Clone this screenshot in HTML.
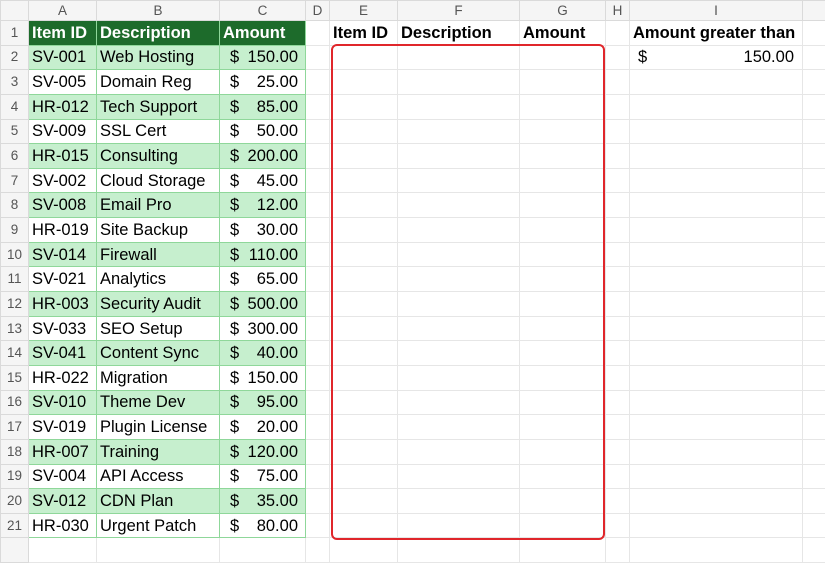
<!DOCTYPE html>
<html><head><style>
*{margin:0;padding:0;box-sizing:border-box}
body{width:825px;height:544px;overflow:hidden;background:#fff;font-family:"Liberation Sans",sans-serif;position:relative}
table{border-collapse:collapse;table-layout:fixed;position:absolute;left:0;top:0;width:832px}
td{height:24.65px;border:1px solid #e6e6e6;font-size:16.5px;color:#000;white-space:nowrap;overflow:hidden;padding:0 3px;line-height:22px}
tr.h td{height:20px;background:#f5f5f5;color:#555;font-size:13.5px;text-align:center;border-color:#dadada;line-height:18px}
td.rn{background:#f5f5f5;color:#555;font-size:13.5px;text-align:center;border-color:#dadada;padding:0}
td.g{background:#c6efce;border-color:#8fd79a}
td.w{border-color:#8fd79a}
td.hd{background:#1d6b2b;color:#fff;font-weight:bold;border-color:#8fd79a}
td.b{font-weight:bold}
.amt{display:flex;justify-content:space-between;padding:0 4px 0 7px}
#box{position:absolute;left:331px;top:44px;width:274px;height:496px;border:2px solid #e0262b;border-radius:6px}
</style></head><body>
<table>
<colgroup><col style="width:28px"><col style="width:68px"><col style="width:123px"><col style="width:86px"><col style="width:24px"><col style="width:68px"><col style="width:122px"><col style="width:86px"><col style="width:24px"><col style="width:173px"><col style="width:30px"></colgroup>
<tr class="h"><td></td><td>A</td><td>B</td><td>C</td><td>D</td><td>E</td><td>F</td><td>G</td><td>H</td><td>I</td><td></td></tr>
<tr><td class="rn">1</td><td class="hd">Item ID</td><td class="hd">Description</td><td class="hd">Amount</td><td></td><td class="b">Item ID</td><td class="b">Description</td><td class="b">Amount</td><td></td><td class="b">Amount greater than</td><td></td></tr>
<tr><td class="rn">2</td><td class="g">SV-001</td><td class="g">Web Hosting</td><td class="g"><div class="amt"><span>$</span><span>150.00</span></div></td><td></td><td></td><td></td><td></td><td></td><td style="padding:0 4px 0 1px"><div class="amt"><span>$</span><span>150.00</span></div></td><td></td></tr>
<tr><td class="rn">3</td><td class="w">SV-005</td><td class="w">Domain Reg</td><td class="w"><div class="amt"><span>$</span><span>25.00</span></div></td><td></td><td></td><td></td><td></td><td></td><td></td><td></td></tr>
<tr><td class="rn">4</td><td class="g">HR-012</td><td class="g">Tech Support</td><td class="g"><div class="amt"><span>$</span><span>85.00</span></div></td><td></td><td></td><td></td><td></td><td></td><td></td><td></td></tr>
<tr><td class="rn">5</td><td class="w">SV-009</td><td class="w">SSL Cert</td><td class="w"><div class="amt"><span>$</span><span>50.00</span></div></td><td></td><td></td><td></td><td></td><td></td><td></td><td></td></tr>
<tr><td class="rn">6</td><td class="g">HR-015</td><td class="g">Consulting</td><td class="g"><div class="amt"><span>$</span><span>200.00</span></div></td><td></td><td></td><td></td><td></td><td></td><td></td><td></td></tr>
<tr><td class="rn">7</td><td class="w">SV-002</td><td class="w">Cloud Storage</td><td class="w"><div class="amt"><span>$</span><span>45.00</span></div></td><td></td><td></td><td></td><td></td><td></td><td></td><td></td></tr>
<tr><td class="rn">8</td><td class="g">SV-008</td><td class="g">Email Pro</td><td class="g"><div class="amt"><span>$</span><span>12.00</span></div></td><td></td><td></td><td></td><td></td><td></td><td></td><td></td></tr>
<tr><td class="rn">9</td><td class="w">HR-019</td><td class="w">Site Backup</td><td class="w"><div class="amt"><span>$</span><span>30.00</span></div></td><td></td><td></td><td></td><td></td><td></td><td></td><td></td></tr>
<tr><td class="rn">10</td><td class="g">SV-014</td><td class="g">Firewall</td><td class="g"><div class="amt"><span>$</span><span>110.00</span></div></td><td></td><td></td><td></td><td></td><td></td><td></td><td></td></tr>
<tr><td class="rn">11</td><td class="w">SV-021</td><td class="w">Analytics</td><td class="w"><div class="amt"><span>$</span><span>65.00</span></div></td><td></td><td></td><td></td><td></td><td></td><td></td><td></td></tr>
<tr><td class="rn">12</td><td class="g">HR-003</td><td class="g">Security Audit</td><td class="g"><div class="amt"><span>$</span><span>500.00</span></div></td><td></td><td></td><td></td><td></td><td></td><td></td><td></td></tr>
<tr><td class="rn">13</td><td class="w">SV-033</td><td class="w">SEO Setup</td><td class="w"><div class="amt"><span>$</span><span>300.00</span></div></td><td></td><td></td><td></td><td></td><td></td><td></td><td></td></tr>
<tr><td class="rn">14</td><td class="g">SV-041</td><td class="g">Content Sync</td><td class="g"><div class="amt"><span>$</span><span>40.00</span></div></td><td></td><td></td><td></td><td></td><td></td><td></td><td></td></tr>
<tr><td class="rn">15</td><td class="w">HR-022</td><td class="w">Migration</td><td class="w"><div class="amt"><span>$</span><span>150.00</span></div></td><td></td><td></td><td></td><td></td><td></td><td></td><td></td></tr>
<tr><td class="rn">16</td><td class="g">SV-010</td><td class="g">Theme Dev</td><td class="g"><div class="amt"><span>$</span><span>95.00</span></div></td><td></td><td></td><td></td><td></td><td></td><td></td><td></td></tr>
<tr><td class="rn">17</td><td class="w">SV-019</td><td class="w">Plugin License</td><td class="w"><div class="amt"><span>$</span><span>20.00</span></div></td><td></td><td></td><td></td><td></td><td></td><td></td><td></td></tr>
<tr><td class="rn">18</td><td class="g">HR-007</td><td class="g">Training</td><td class="g"><div class="amt"><span>$</span><span>120.00</span></div></td><td></td><td></td><td></td><td></td><td></td><td></td><td></td></tr>
<tr><td class="rn">19</td><td class="w">SV-004</td><td class="w">API Access</td><td class="w"><div class="amt"><span>$</span><span>75.00</span></div></td><td></td><td></td><td></td><td></td><td></td><td></td><td></td></tr>
<tr><td class="rn">20</td><td class="g">SV-012</td><td class="g">CDN Plan</td><td class="g"><div class="amt"><span>$</span><span>35.00</span></div></td><td></td><td></td><td></td><td></td><td></td><td></td><td></td></tr>
<tr><td class="rn">21</td><td class="w">HR-030</td><td class="w">Urgent Patch</td><td class="w"><div class="amt"><span>$</span><span>80.00</span></div></td><td></td><td></td><td></td><td></td><td></td><td></td><td></td></tr>
<tr><td class="rn"></td><td></td><td></td><td></td><td></td><td></td><td></td><td></td><td></td><td></td><td></td></tr>
</table>
<div id="box"></div>
</body></html>
